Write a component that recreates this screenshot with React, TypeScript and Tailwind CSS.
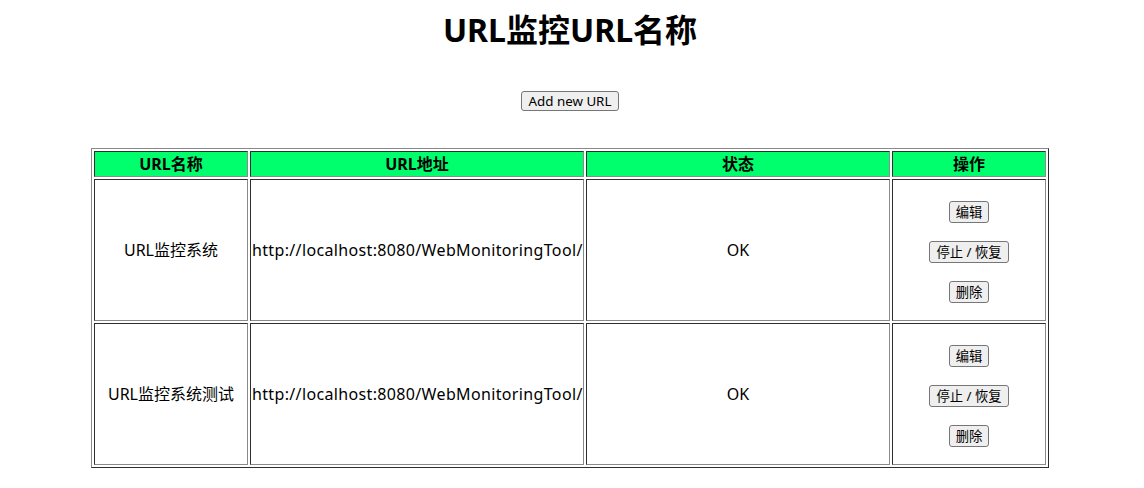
import React from 'react'

const rows = [
  { name: 'URL监控系统', url: 'http://localhost:8080/WebMonitoringTool/', status: 'OK' },
  { name: 'URL监控系统测试', url: 'http://localhost:8080/WebMonitoringTool/', status: 'OK' },
]

const font = { fontFamily: '"Noto Sans", "Noto Sans CJK SC", sans-serif' }

const cell =
  'border border-t-[#2e2e2e] border-l-[#2e2e2e] border-r-[#8a8a8a] border-b-[#8a8a8a] p-px text-center align-middle'

function Btn({ children }: { children: React.ReactNode }) {
  return (
    <button className="h-[22px] rounded-[3px] border border-[#767676] bg-[#efefef] px-[6px] text-[13.33px] leading-[18px] text-black">
      {children}
    </button>
  )
}

export default function App() {
  return (
    <div className="min-h-screen bg-white pr-[4px] text-black" style={font}>
      <h1 className="mt-[11px] text-center text-[32px] font-bold leading-[37px]">URL监控URL名称</h1>

      <div className="mt-[43px] flex justify-center">
        <button className="h-[20px] rounded-[3px] border border-[#767676] bg-[#efefef] px-[7px] text-[13.33px] leading-[16px]">
          Add new URL
        </button>
      </div>

      <table className="mx-auto mt-[37px] w-[958px] table-fixed border-separate border-spacing-[2px] border border-t-[#8a8a8a] border-l-[#8a8a8a] border-r-[#2e2e2e] border-b-[#2e2e2e] text-[16px]">
        <thead>
          <tr>
            <th className={`${cell} h-[26px] w-[154px] bg-[#00ff6c] font-bold leading-[22px]`}>URL名称</th>
            <th className={`${cell} h-[26px] w-[334px] bg-[#00ff6c] font-bold leading-[22px]`}>URL地址</th>
            <th className={`${cell} h-[26px] w-[304px] bg-[#00ff6c] font-bold leading-[22px]`}>状态</th>
            <th className={`${cell} h-[26px] w-[154px] bg-[#00ff6c] font-bold leading-[22px]`}>操作</th>
          </tr>
        </thead>
        <tbody>
          {rows.map((r) => (
            <tr key={r.name}>
              <td className={`${cell} h-[142px]`}>{r.name}</td>
              <td className={`${cell} h-[142px] whitespace-nowrap tracking-[0.35px]`}>{r.url}</td>
              <td className={`${cell} h-[142px]`}>{r.status}</td>
              <td className={`${cell} h-[142px]`}>
                <div className="flex flex-col items-center gap-[18px] pt-[4px]">
                  <Btn>编辑</Btn>
                  <Btn>停止 / 恢复</Btn>
                  <Btn>删除</Btn>
                </div>
              </td>
            </tr>
          ))}
        </tbody>
      </table>
    </div>
  )
}
